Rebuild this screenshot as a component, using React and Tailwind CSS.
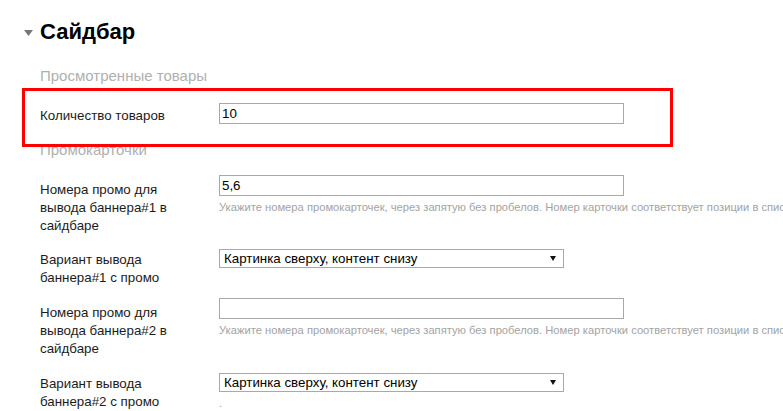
import React from "react";

const HELP =
  "Укажите номера промокарточек, через запятую без пробелов. Номер карточки соответствует позиции в списке промокарточек";

const Help = ({ children }) => (
  <div className="mt-[4px] whitespace-nowrap text-[11.2px] leading-[14px] text-[#a3a3a3]">
    {children}
  </div>
);

const TextRow = ({ label, value, help, className = "" }) => (
  <div className={`flex items-start ${className}`}>
    <div className="w-[179px] shrink-0 pr-[19px] pt-[6px] text-[13.33px] leading-[18px] text-[#1c1c1c]">
      {label}
    </div>
    <div className="flex flex-col">
      <div className="h-[21px] w-[405px] border border-[#a9a9a9] bg-white px-[2px] text-[13.33px] leading-[19px] text-black">
        {value}
      </div>
      {help && <Help>{help}</Help>}
    </div>
  </div>
);

const SelectRow = ({ label, help, className = "" }) => (
  <div className={`flex items-start ${className}`}>
    <div className="w-[179px] shrink-0 pr-[19px] pt-[2px] text-[13.33px] leading-[18px] text-[#1c1c1c]">
      {label}
    </div>
    <div className="flex flex-col">
      <div className="flex h-[19px] w-[345px] items-center justify-between border border-[#a9a9a9] bg-white pl-[4px] pr-[7px] text-[13.33px] leading-[17px] text-black">
        <span>Картинка сверху, контент снизу</span>
        <svg width="6" height="5" viewBox="0 0 6 5">
          <path d="M0 0 H6 L3 5 Z" fill="#111" />
        </svg>
      </div>
      {help && <Help>{help}</Help>}
    </div>
  </div>
);

export default function App() {
  return (
    <div className="relative h-[411px] w-[783px] overflow-hidden bg-white font-['Liberation_Sans',Arial,sans-serif]">
      <div className="pl-[24px] pt-[18px]">
        <div className="flex h-[28px] items-center">
          <svg width="9" height="6" viewBox="0 0 9 6" className="mr-[7px] mt-[2px]">
            <path d="M0 0 H9 L4.5 6 Z" fill="#777" />
          </svg>
          <h2 className="text-[22px] font-bold leading-[28px] text-black">Сайдбар</h2>
        </div>

        <div className="pl-[16px]">
          <div className="mt-[21px] h-[18px] text-[15px] leading-[18px] text-[#b0b0b0]">
            Просмотренные товары
          </div>
          <div className="mt-[18px] h-[22px]">
            <div className="flex items-start">
              <div className="w-[179px] shrink-0 pr-[19px] pt-[4px] text-[13.33px] leading-[18px] text-[#1c1c1c]">
                Количество товаров
              </div>
              <div className="h-[21px] w-[405px] border border-[#a9a9a9] bg-white px-[2px] text-[13.33px] leading-[19px] text-black">
                10
              </div>
            </div>
          </div>
          <div className="mt-[16px] h-[18px] text-[15px] leading-[18px] text-[#b0b0b0]">
            Промокарточки
          </div>

          <div className="mt-[16px] h-[74px]">
            <TextRow label="Номера промо для вывода баннера#1 в сайдбаре" value="5,6" help={HELP} />
          </div>
          <div className="h-[49px]">
            <SelectRow label="Вариант вывода баннера#1 с промо" />
          </div>
          <div className="h-[75px]">
            <TextRow label="Номера промо для вывода баннера#2 в сайдбаре" value="" help={HELP} />
          </div>
          <div>
            <SelectRow label="Вариант вывода баннера#2 с промо" help="." />
          </div>
        </div>
      </div>

      {/* annotation frame */}
      <div className="absolute left-[22px] top-[88px] h-[59px] w-[651px] border-[3px] border-[#ff0000]" />
    </div>
  );
}
